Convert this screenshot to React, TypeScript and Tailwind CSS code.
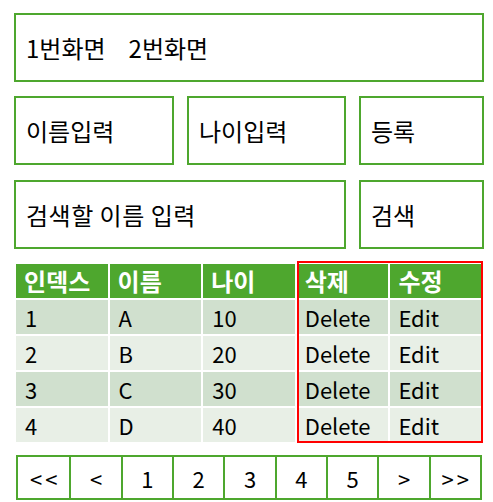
import React from 'react';

const rows = [
    { idx: 1, name: 'A', age: 10 },
    { idx: 2, name: 'B', age: 20 },
    { idx: 3, name: 'C', age: 30 },
    { idx: 4, name: 'D', age: 40 },
];

const pages = ['<<', '<', '1', '2', '3', '4', '5', '>', '>>'];

const Box = ({ className, children }: { className: string; children?: React.ReactNode }) => (
    <div className={`h-[69px] border-2 border-[#4ea72e] flex items-center pl-[10px] text-[24px] ${className}`}>
        {children}
    </div>
);

export default function App() {
    return (
        <div
            className="bg-white min-h-[502px] text-black text-[22px] leading-none"
            style={{ fontFamily: '"Noto Sans CJK KR", "Noto Sans", sans-serif' }}
        >
            <div className="w-[470px] ml-[14px] pt-[13px] flex flex-col">
                <Box className="w-full">
                    <span>1번화면</span>
                    <span className="ml-[23px]">2번화면</span>
                </Box>
                <div className="flex gap-[13px] mt-[14px]">
                    <Box className="w-[160px]">이름입력</Box>
                    <Box className="w-[159px]">나이입력</Box>
                    <Box className="w-[125px]">등록</Box>
                </div>
                <div className="flex gap-[13px] mt-[15px]">
                    <Box className="w-[332px]">
                        <span className="tracking-[0.5px]">검색할 이름 입력</span>
                    </Box>
                    <Box className="w-[125px]">검색</Box>
                </div>

                <div className="relative mt-[13px]">
                    <table className="w-full table-fixed border-separate border-spacing-[2px]">
                        <thead>
                            <tr className="h-[34px] bg-[#4ea72e] text-white text-[24px]">
                                {['인덱스', '이름', '나이', '삭제', '수정'].map((h) => (
                                    <th key={h} className="text-left pl-[8px] font-bold">
                                        {h}
                                    </th>
                                ))}
                            </tr>
                        </thead>
                        <tbody>
                            {rows.map((r, i) => (
                                <tr
                                    key={r.idx}
                                    className={`h-[34px] ${i % 2 === 0 ? 'bg-[#d0e0ce]' : 'bg-[#e8efe6]'}`}
                                >
                                    <td className="pl-[9px]">{r.idx}</td>
                                    <td className="pl-[9px]">{r.name}</td>
                                    <td className="pl-[9px]">{r.age}</td>
                                    <td className="pl-[8px]">Delete</td>
                                    <td className="pl-[8px]">Edit</td>
                                </tr>
                            ))}
                        </tbody>
                    </table>
                    <div className="absolute left-[283px] top-[-1px] w-[186px] h-[182px] border-2 border-[#ff0000] pointer-events-none" />
                </div>

                <div className="mt-[11px] ml-[2px] w-[466px] h-[45px] border-2 border-[#4ea72e] grid grid-cols-9">
                    {pages.map((p, i) => (
                        <div
                            key={p}
                            className={`flex items-center justify-center ${p.length > 1 ? 'tracking-[3px] pl-[3px]' : ''} ${i > 0 ? 'border-l-2 border-[#4ea72e]' : ''}`}
                        >
                            {p}
                        </div>
                    ))}
                </div>
            </div>
        </div>
    );
}
